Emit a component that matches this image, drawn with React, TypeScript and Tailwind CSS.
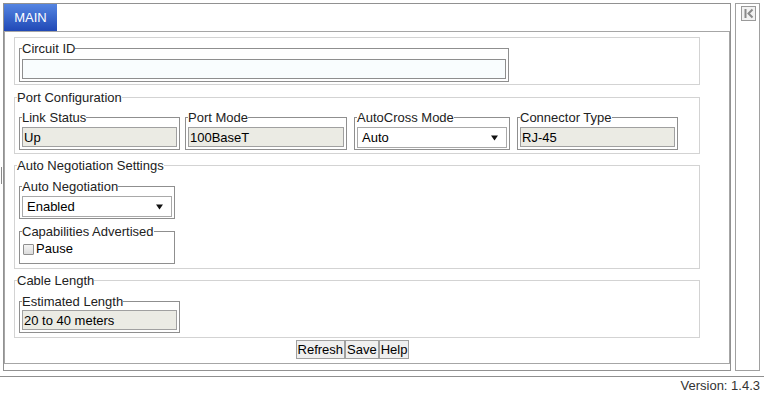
import type { ReactNode } from 'react'

const legendCls = 'text-[13px] leading-[15px] text-[#222]'

function Group({ legend, className, children }: { legend?: string; className?: string; children: ReactNode }) {
  return (
    <fieldset className={`w-[686px] ml-[9px] border border-[#d3d3d3] pl-[2px] pr-[2px] ${className ?? ''}`}>
      {legend && <legend className={legendCls}>{legend}</legend>}
      {children}
    </fieldset>
  )
}

function Box({ legend, className, children }: { legend: string; className?: string; children: ReactNode }) {
  return (
    <fieldset className={`border border-[#8f8f8f] px-[2px] ${className ?? ''}`}>
      <legend className={legendCls}>{legend}</legend>
      {children}
    </fieldset>
  )
}

function ReadOnly({ value, width = 'w-[155px]' }: { value: string; width?: string }) {
  return (
    <input
      readOnly
      value={value}
      className={`block h-[20px] ${width} border border-[#a0a0a0] bg-[#ebebe4] px-[1px] text-[13px] text-black outline-none`}
    />
  )
}

function Select({ value }: { value: string }) {
  return (
    <div className="flex h-[21px] w-[150px] items-center justify-between border border-[#a9a9a9] bg-white pl-[4px] pr-[8px] text-[13px] text-black">
      <span>{value}</span>
      <svg width="7" height="6" viewBox="0 0 7 6">
        <path d="M0 0.5 H7 L3.5 5.5 Z" fill="#111" />
      </svg>
    </div>
  )
}

export default function App() {
  return (
    <div className="h-[394px] w-[764px] overflow-hidden bg-white font-['Liberation_Sans',Arial,sans-serif] text-[13px]">
      <div className="flex h-[376px] pt-[3px]">
        {/* splitter handle */}
        <div className="w-[3px]">
          <div className="ml-[1px] mt-[164px] h-[17px] w-[1px] bg-[#8a8a8a]" />
        </div>

        {/* main tab panel */}
        <div className="flex h-[368px] w-[728px] flex-col border border-[#919191]">
          <div className="flex h-[27px]">
            <div className="flex w-[53px] items-center justify-center bg-linear-to-b from-[#5585e2] to-[#2148b6] text-[13px] text-white">
              MAIN
            </div>
          </div>
          <div className="h-[333px] border border-[#a6a6a6]">
            <Group className="mt-[5px] pt-[3px] pb-[2px]">
              <Box legend="Circuit ID" className="ml-[2px] w-[490px] pt-[3px] pb-[2px]">
                <input
                  defaultValue=""
                  className="block h-[20px] w-[484px] border border-[#8e8e8e] bg-[#f9fdfe] px-[2px] text-[13px] outline-none"
                />
              </Box>
            </Group>

            <Group legend="Port Configuration" className="mt-[5px] pt-[5px] pb-[3px]">
              <div className="flex items-start">
                <Box legend="Link Status" className="ml-[2px] pt-[2px] pb-[2px]">
                  <ReadOnly value="Up" />
                </Box>
                <Box legend="Port Mode" className="ml-[5px] pt-[2px] pb-[2px]">
                  <ReadOnly value="100BaseT" width="w-[156px]" />
                </Box>
                <Box legend="AutoCross Mode" className="ml-[7px] pt-[2px] pb-[1px]">
                  <Select value="Auto" />
                </Box>
                <Box legend="Connector Type" className="ml-[7px] pt-[2px] pb-[2px]">
                  <ReadOnly value="RJ-45" />
                </Box>
              </div>
            </Group>

            <Group legend="Auto Negotiation Settings" className="mt-[4px] pt-[6px] pb-[4px]">
              <Box legend="Auto Negotiation" className="ml-[2px] w-[156px] pt-[2px] pb-[1px]">
                <Select value="Enabled" />
              </Box>
              <Box legend="Capabilities Advertised" className="ml-[2px] mt-[5px] w-[156px] pt-[1px] pb-[5px]">
                <label className="flex h-[18px] items-center gap-[2px] pl-[1px] text-[13px] text-black">
                  <span className="block h-[11px] w-[11px] rounded-[1px] border border-[#8f8f8f] bg-linear-to-b from-[#f4f4f4] to-[#dcdcdc]" />
                  Pause
                </label>
              </Box>
            </Group>

            <Group legend="Cable Length" className="mt-[4px] pt-[6px] pb-[4px]">
              <Box legend="Estimated Length" className="ml-[2px] w-[161px] pt-[1px] pb-[2px]">
                <ReadOnly value="20 to 40 meters" />
              </Box>
            </Group>

            <div className="mt-[2px] flex w-[695px] justify-center">
              {['Refresh', 'Save', 'Help'].map((b) => (
                <button
                  key={b}
                  className="h-[19px] border border-[#a0a0a0] bg-[#efefef] px-[1px] text-[13px] leading-[15px] text-black"
                >
                  {b}
                </button>
              ))}
            </div>
          </div>
        </div>

        {/* collapsed side panel */}
        <div className="ml-[4px] h-[368px] w-[25px] border border-[#a0a0a0]">
          <div className="ml-[5px] mt-[2px] flex h-[15px] w-[15px] items-center justify-center border border-[#9a9a9a] bg-[#f2f2f2]">
            <svg width="11" height="11" viewBox="0 0 11 11">
              <rect x="1.5" y="1" width="2" height="9" fill="#8a8a8a" />
              <path d="M9.5 1.5 L5.5 5.5 L9.5 9.5" fill="none" stroke="#8a8a8a" strokeWidth="2" />
            </svg>
          </div>
        </div>
      </div>

      <div className="flex h-[18px] items-center justify-end border-t border-[#8f8f8f] pr-[4px] text-[13px] leading-[15px] text-[#333]">
        Version: 1.4.3
      </div>
    </div>
  )
}
